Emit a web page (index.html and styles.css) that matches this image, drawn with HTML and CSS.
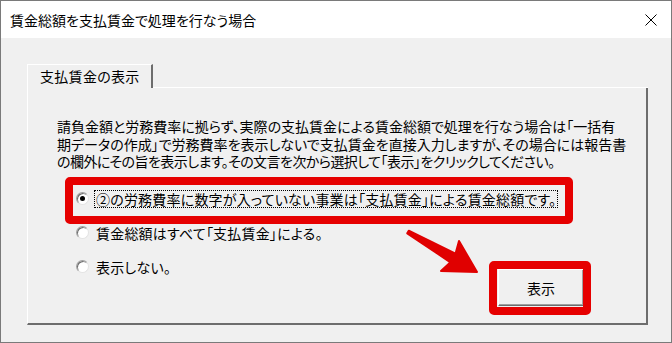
FILE: index.html
```html
<!DOCTYPE html>
<html lang="ja">
<head>
<meta charset="utf-8">
<link rel="stylesheet" href="styles.css">
</head>
<body>
<div class="window">
  <div class="titlebar">
    <span class="title">賃金総額を支払賃金で処理を行なう場合</span>
    <svg class="close" viewBox="0 0 12 12" width="12" height="12"><path d="M0.5 0.5 L11.5 11.5 M11.5 0.5 L0.5 11.5" stroke="#000" stroke-width="1" fill="none"/></svg>
  </div>
  <div class="client">
    <div class="tabs">
      <div class="tab">支払賃金の表示</div>
      <div class="tab-rest"></div>
    </div>
    <div class="panel">
      <p class="desc">請負金額と労務費率に拠らず、実際の支払賃金による賃金総額で処理を行なう場合は「一括有<br>期データの作成」で労務費率を表示しないで支払賃金を直接入力しますが、その場合には報告書<br><span class="tight">の欄外にその旨を表示します。その文言を次から選択して「表示」をクリックしてください。</span></p>
      <div class="choices">
        <div class="radios">
          <div class="row"><span class="radio checked"></span><span class="label focus">②の労務費率に数字が入っていない事業は「支払賃金」による賃金総額です。</span></div>
          <div class="row"><span class="radio"></span><span class="label">賃金総額はすべて「支払賃金」による。</span></div>
          <div class="row"><span class="radio"></span><span class="label">表示しない。</span></div>
        </div>
        <button class="btn">表示</button>
      </div>
    </div>
  </div>
  <div class="mark mark-option"></div>
  <div class="mark mark-button"></div>
  <svg class="arrow" viewBox="0 0 85 55" width="85" height="55">
    <polygon points="8.75,5.7 55.5,28.7 59,16 77,47 41,46 50.5,37.3 7.25,8.3" fill="#e00000" stroke="#e00000" stroke-width="2" stroke-linejoin="round"/>
  </svg>
</div>
</body>
</html>
```
FILE: styles.css
```css
* { box-sizing: border-box; }
html, body { margin: 0; padding: 0; }
body {
  font-family: "Noto Sans CJK JP", "Noto Sans", sans-serif;
  color: #000;
  background: #f0f0f0;
  font-feature-settings: "palt";
}
.window {
  position: relative;
  width: 672px;
  height: 343px;
  border: 1px solid #7a7a7a;
  background: #f0f0f0;
  display: flex;
  flex-direction: column;
  overflow: hidden;
}
.titlebar {
  height: 37px;
  background: #fff;
  display: flex;
  align-items: center;
  justify-content: space-between;
  padding: 0 14px 0 9px;
  flex: none;
}
.title {
  font-size: 14px;
  line-height: 1;
  white-space: nowrap;
}
.close { display: block; }
.client {
  flex: 1;
  padding: 26px 23px 0 26px;
  display: flex;
  flex-direction: column;
}
.tabs {
  display: flex;
  height: 24px;
  flex: none;
}
.tab {
  width: 126px;
  border-top: 1px solid #fff;
  border-left: 1px solid #fff;
  border-right: 2px solid #6d6d6d;
  font-size: 14px;
  line-height: 22px;
  padding-left: 12px;
  letter-spacing: 0.3px;
  white-space: nowrap;
}
.tab-rest {
  flex: 1;
  border-bottom: 1px solid #fff;
}
.panel {
  height: 237px;
  border-left: 1px solid #fff;
  border-right: 2px solid #6d6d6d;
  border-bottom: 2px solid #6d6d6d;
  padding: 30px 62px 17px 29px;
  display: flex;
  flex-direction: column;
}
.desc {
  margin: 0;
  font-size: 14px;
  line-height: 17.5px;
  white-space: nowrap;
}
.tight { letter-spacing: -0.55px; }
.choices {
  flex: 1;
  display: flex;
  padding-top: 19px;
}
.radios {
  display: flex;
  flex-direction: column;
  gap: 16px;
  padding-left: 19px;
  flex: 1 1 0;
  min-width: 0;
}
.row {
  display: flex;
  align-items: center;
  height: 18px;
}
.radio {
  width: 13px;
  height: 13px;
  border-radius: 50%;
  background: #fff;
  border: 1px solid;
  border-color: #a0a0a0 #e3e3e3 #e3e3e3 #a0a0a0;
  box-shadow: inset 1px 1px 0 #6d6d6d;
  position: relative;
  flex: none;
  margin-right: 5px;
}
.radio.checked::after {
  content: "";
  position: absolute;
  left: 3px;
  top: 3px;
  width: 5px;
  height: 5px;
  border-radius: 50%;
  background: #000;
}
.label {
  font-size: 14px;
  line-height: 16px;
  padding: 0 1px;
  letter-spacing: 0.2px;
  white-space: nowrap;
  border: 1px dotted transparent;
  flex: none;
}
.label.focus { border-color: #000; }
.btn {
  flex: none;
  align-self: flex-end;
  width: 86px;
  height: 37px;
  background: #f0f0f0;
  border: 1px solid;
  border-color: #fff #6d6d6d #6d6d6d #fff;
  box-shadow: inset -1px -1px 0 #a0a0a0;
  font-family: inherit;
  font-size: 14px;
  color: #000;
  padding: 0;
  text-align: center;
}
.mark {
  position: absolute;
  border: 8px solid #e60000;
  border-radius: 5px;
}
.mark-option { left: 64px; top: 176px; width: 508px; height: 47px; }
.mark-button { left: 488px; top: 260px; width: 102px; height: 54px; }
.arrow {
  position: absolute;
  left: 399px;
  top: 224px;
}
```
